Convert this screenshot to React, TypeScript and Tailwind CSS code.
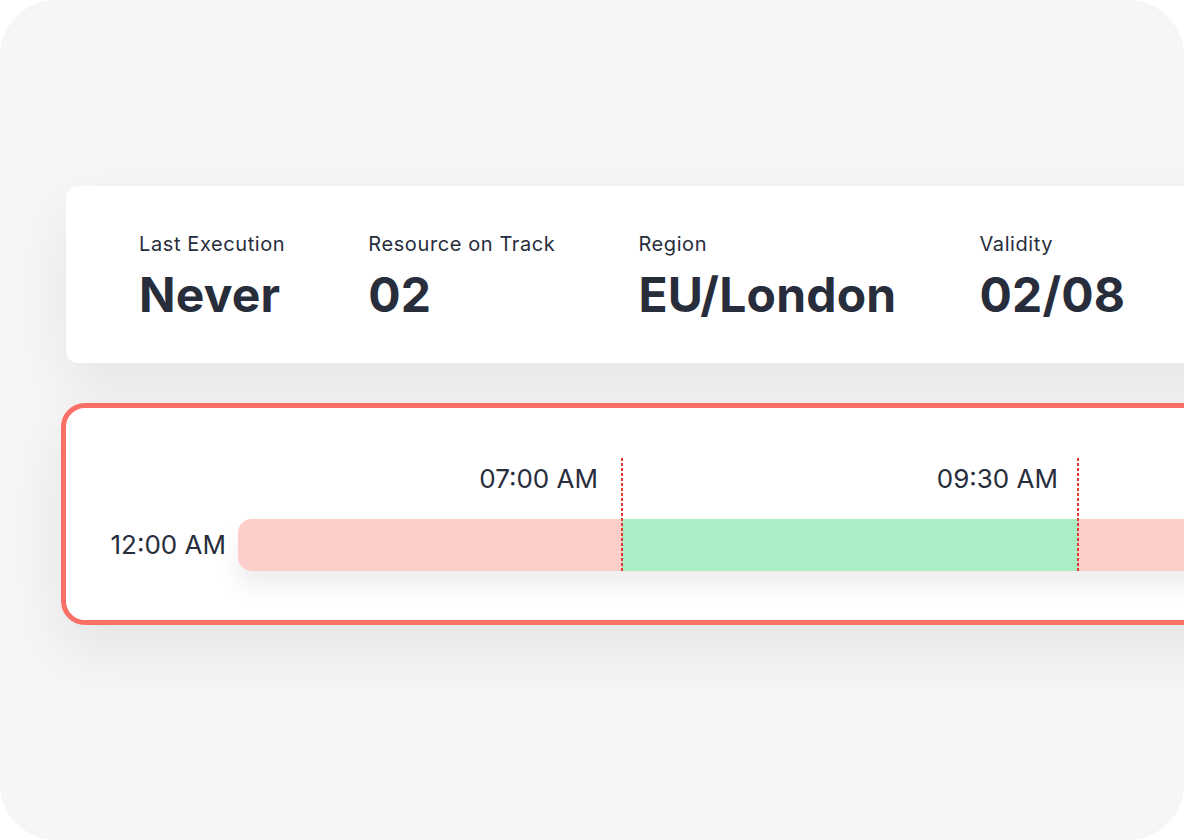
import React from "react";

const stats = [
  { label: "Last Execution", value: "Never" },
  { label: "Resource on Track", value: "02" },
  { label: "Region", value: "EU/London" },
  { label: "Validity", value: "02/08" },
];

const dash =
  "absolute -top-[61px] bottom-0 w-[2px] bg-[repeating-linear-gradient(to_bottom,#e2382f_0px,#e2382f_3px,transparent_3px,transparent_5px)]";

const App = () => {
  return (
    <div className="w-[1184px] h-[840px] bg-white">
      <div
        className="w-full h-full bg-[#f6f6f6] rounded-[56px] overflow-hidden flex flex-col pt-[186px] text-[#282d3c]"
        style={{ fontFamily: "Inter, 'Noto Sans', sans-serif" }}
      >
        {/* Summary card */}
        <div className="ml-[66px] w-[1200px] shrink-0 bg-white rounded-xl shadow-[0_24px_60px_rgba(0,0,0,0.07)] flex gap-[83px] pl-[73px] pt-[46px] pb-[44px]">
          {stats.map((s) => (
            <div key={s.label} className="flex flex-col shrink-0 whitespace-nowrap">
              <span className="text-[20px] leading-[24px] tracking-[0.6px]">
                {s.label}
              </span>
              <span className="mt-[15px] text-[48px] leading-[48px] font-bold tracking-[0.2px]">
                {s.value}
              </span>
            </div>
          ))}
        </div>

        {/* Timeline card */}
        <div className="ml-[61px] mt-[40px] w-[1200px] shrink-0 bg-white border-[5px] border-[#fa6f66] rounded-[24px] shadow-[0_24px_60px_rgba(0,0,0,0.08)] flex pt-[50px] pb-[49px]">
          <div className="w-[160px] shrink-0 flex flex-col">
            <div className="h-[61px]"></div>
            <div className="h-[52px] flex items-center justify-end whitespace-nowrap text-[26px] leading-[30px]">
              12:00 AM
            </div>
          </div>

          <div className="ml-[12px] flex-1 flex flex-col">
            <div className="h-[61px] flex text-[26px] leading-[30px] whitespace-nowrap">
              <div className="w-[384px] shrink-0 pt-[6px] pr-[24px] text-right">07:00 AM</div>
              <div className="w-[456px] shrink-0 pt-[6px] pr-[20px] text-right">09:30 AM</div>
            </div>
            <div className="h-[52px] flex rounded-l-[14px] bg-[#fdcdca] shadow-[0_16px_24px_rgba(0,0,0,0.07)]">
              <div className="w-[384px] shrink-0"></div>
              <div className="relative w-[456px] shrink-0 bg-[#abeec6]">
                <div className={`${dash} -left-px`}></div>
                <div className={`${dash} -right-px`}></div>
              </div>
              <div className="flex-1"></div>
            </div>
          </div>
        </div>
      </div>
    </div>
  );
};

export default App;
